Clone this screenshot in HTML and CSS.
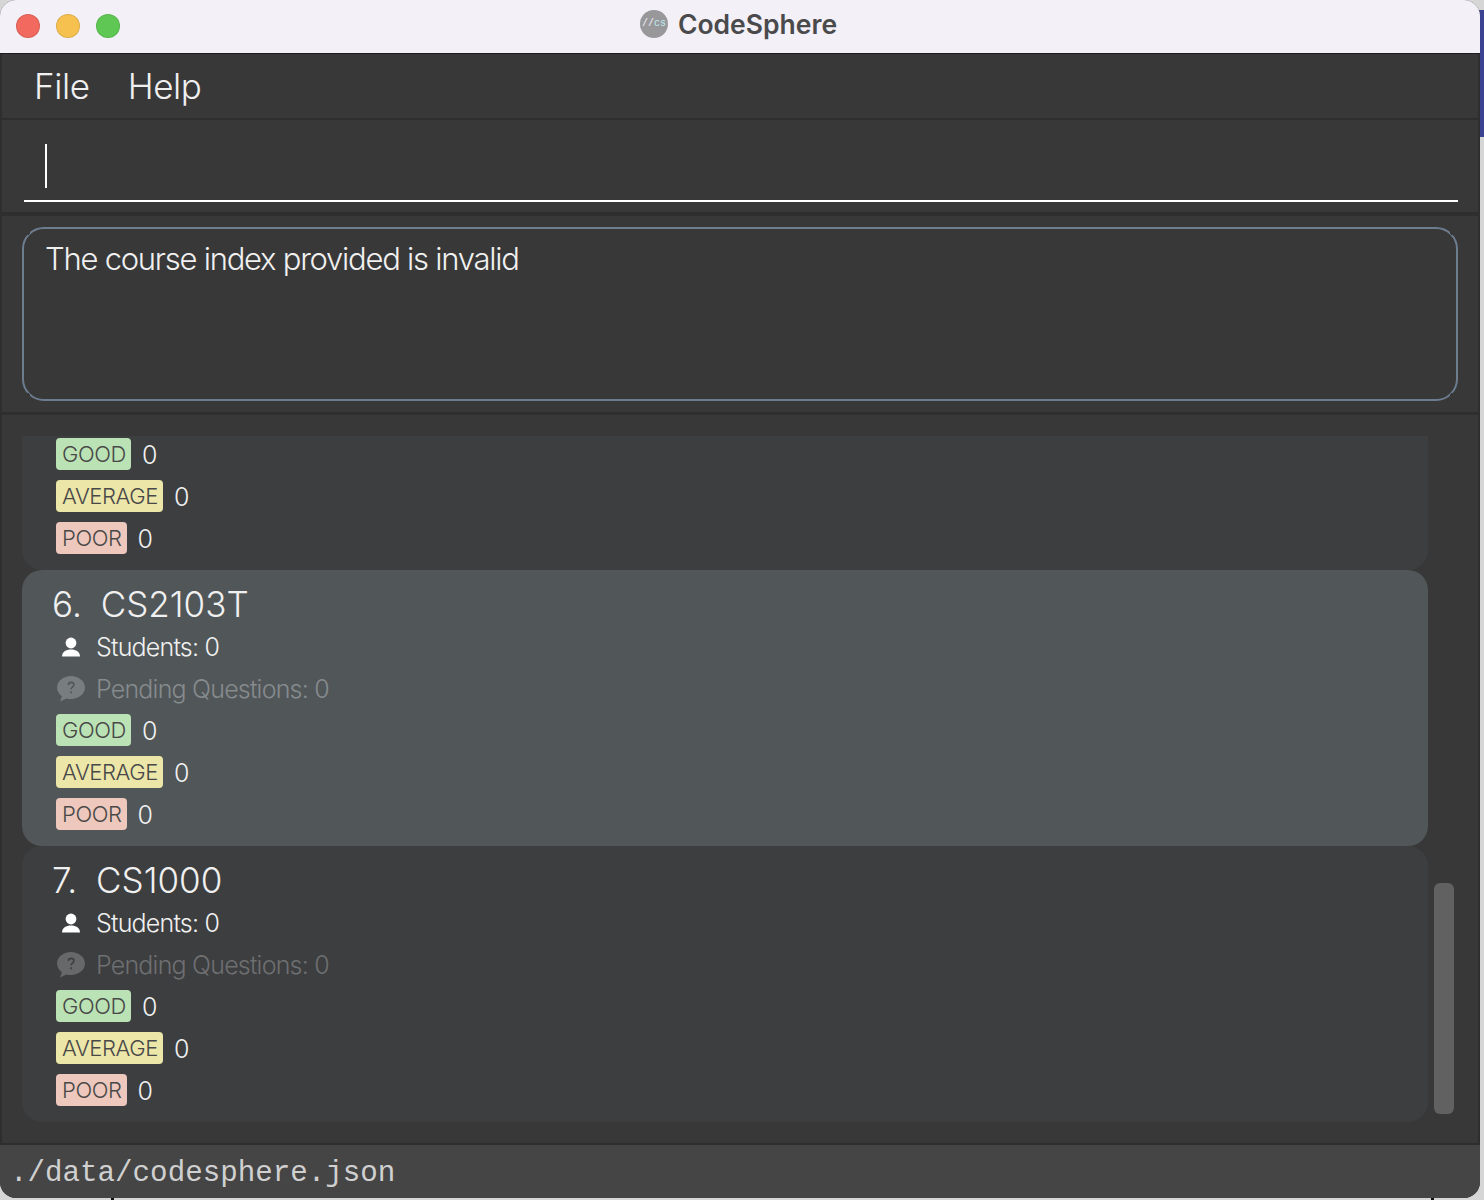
FILE: index.html
```html
<!DOCTYPE html>
<html lang="en">
<head>
    <meta charset="UTF-8">
    <meta name="viewport" content="width=device-width, initial-scale=1.0">
    <title>CodeSphere</title>
    <link rel="stylesheet" href="styles.css">
</head>
<body>
    <div class="desktop-strip"></div>
    <span class="desktop-tick tick-left"></span>
    <span class="desktop-tick tick-right"></span>
    <div class="window">
        <div class="titlebar">
            <div class="traffic">
                <span class="light red"></span>
                <span class="light yellow"></span>
                <span class="light green"></span>
            </div>
            <div class="title">
                <span class="logo">//<span class="logo-cs">cs</span></span>
                <span>CodeSphere</span>
            </div>
        </div>

        <div class="menubar">
            <span>File</span>
            <span>Help</span>
        </div>

        <div class="command-box">
            <div class="command-input"><span class="caret"></span></div>
        </div>

        <div class="result-pane">
            <div class="result-box">The course index provided is invalid</div>
        </div>

        <div class="course-list">
            <div class="card partial">
                <div class="row"><span class="tag good">GOOD</span><span class="count">0</span></div>
                <div class="row"><span class="tag average">AVERAGE</span><span class="count">0</span></div>
                <div class="row"><span class="tag poor">POOR</span><span class="count">0</span></div>
            </div>

            <div class="card selected">
                <div class="card-title"><span class="index">6.</span><span>CS2103T</span></div>
                <div class="row info">
                    <svg class="icon" viewBox="0 0 28 28"><circle cx="15" cy="10" r="5.400"/><path d="M6 23.500c0-4.600 4-7 9-7s9 2.400 9 7z"/></svg>
                    <span>Students: 0</span>
                </div>
                <div class="row info muted">
                    <svg class="icon" viewBox="-1 0 28 28"><path d="M14 1C6.300 1 0 6.200 0 12.500c0 3.500 1.900 6.600 4.900 8.700L3 26.500l6.300-3.100c1.500.4 3.100.6 4.700.6 7.700 0 14-5.200 14-11.500S21.700 1 14 1z"/><path class="qmark" d="M11.300 9.800c.2-1.500 1.300-2.400 2.800-2.400 1.600 0 2.800 1 2.800 2.400 0 2.300-2.800 2.300-2.800 4.500M14.100 16.300v1.900"/></svg>
                    <span>Pending Questions: 0</span>
                </div>
                <div class="row"><span class="tag good">GOOD</span><span class="count">0</span></div>
                <div class="row"><span class="tag average">AVERAGE</span><span class="count">0</span></div>
                <div class="row"><span class="tag poor">POOR</span><span class="count">0</span></div>
            </div>

            <div class="card">
                <div class="card-title"><span class="index">7.</span><span>CS1000</span></div>
                <div class="row info">
                    <svg class="icon" viewBox="0 0 28 28"><circle cx="15" cy="10" r="5.400"/><path d="M6 23.500c0-4.600 4-7 9-7s9 2.400 9 7z"/></svg>
                    <span>Students: 0</span>
                </div>
                <div class="row info muted">
                    <svg class="icon" viewBox="-1 0 28 28"><path d="M14 1C6.300 1 0 6.200 0 12.500c0 3.500 1.900 6.600 4.900 8.700L3 26.500l6.300-3.100c1.500.4 3.100.6 4.700.6 7.700 0 14-5.200 14-11.500S21.700 1 14 1z"/><path class="qmark" d="M11.300 9.800c.2-1.500 1.300-2.400 2.800-2.400 1.600 0 2.800 1 2.800 2.400 0 2.300-2.800 2.300-2.800 4.500M14.100 16.300v1.900"/></svg>
                    <span>Pending Questions: 0</span>
                </div>
                <div class="row"><span class="tag good">GOOD</span><span class="count">0</span></div>
                <div class="row"><span class="tag average">AVERAGE</span><span class="count">0</span></div>
                <div class="row"><span class="tag poor">POOR</span><span class="count">0</span></div>
            </div>

            <div class="scroll-thumb"></div>
        </div>

        <div class="statusbar">./data/codesphere.json</div>
    </div>
</body>
</html>
```

FILE: styles.css
```css
body {
    margin: 0;
    width: 1484px;
    height: 1200px;
    overflow: hidden;
    position: relative;
    background: #d6d6d6;
    font-family: Inter, "Noto Sans", sans-serif;
    color: #f0f0f0;
}

/* bit of another window peeking out on the right */
.desktop-strip {
    position: absolute;
    left: 1470px;
    top: 10px;
    width: 14px;
    height: 127px;
    background: #3a4291;
}
.desktop-tick {
    position: absolute;
    top: 1197px;
    width: 3px;
    height: 3px;
    background: #111;
}
.tick-left { left: 111px; }
.tick-right { left: 1431px; }

.window {
    position: relative;
    width: 1480px;
    height: 1198px;
    display: flex;
    flex-direction: column;
    border-radius: 16px;
    overflow: hidden;
    background: #383838;
}

.titlebar {
    height: 53px;
    flex: none;
    display: flex;
    align-items: center;
    justify-content: center;
    position: relative;
    background: #f3f1f7;
    border-bottom: 1px solid #1c1c1c;
}
.traffic {
    position: absolute;
    left: 16px;
    top: 14px;
    display: flex;
    gap: 16px;
}
.light {
    width: 22px;
    height: 22px;
    border: 1px solid rgba(0, 0, 0, 0.1);
    border-radius: 50%;
}
.red { background: #f1695f; }
.yellow { background: #f7c14f; }
.green { background: #5fc854; }

.title {
    display: flex;
    align-items: center;
    gap: 10px;
    margin: -5px 0 0 -3px;
    font-size: 26.5px;
    font-weight: 600;
    color: #4a4a4c;
}
.logo {
    width: 28px;
    height: 28px;
    border-radius: 50%;
    background: #98979a;
    color: #f3f1f7;
    font-family: "Liberation Mono", monospace;
    font-size: 10px;
    font-weight: 400;
    line-height: 28px;
    text-align: center;
}
.logo-cs { color: #bfeef2; }

.menubar {
    height: 64px;
    flex: none;
    display: flex;
    align-items: center;
    gap: 38px;
    padding-left: 32px;
    font-size: 35px;
    font-weight: 300;
    letter-spacing: -0.4px;
    background: #383838;
    border-left: 2px solid #2e2e2e;
    border-right: 2px solid #2e2e2e;
}

.command-box {
    height: 94px;
    flex: none;
    box-sizing: border-box;
    padding: 24px 20px 10px 22px;
    border-top: 2px solid #2e2e2e;
    border-left: 2px solid #2e2e2e;
    border-right: 2px solid #2e2e2e;
}
.command-input {
    height: 58px;
    box-sizing: border-box;
    border-bottom: 2px solid #fff;
    padding-left: 21px;
}
.caret {
    display: block;
    width: 2px;
    height: 44px;
    background: #fff;
}

.result-pane {
    height: 203px;
    flex: none;
    box-sizing: border-box;
    padding: 11px 20px 11px 20px;
    border-top: 4px solid #2e2e2e;
    border-left: 2px solid #2e2e2e;
    border-right: 2px solid #2e2e2e;
    border-bottom: 3px solid #2e2e2e;
}
.result-box {
    position: relative;
    height: 174px;
    box-sizing: border-box;
    padding: 11px 21px;
    border: 2px solid #6d7d90;
    border-radius: 22px;
    font-size: 31px;
    font-weight: 300;
    line-height: 38px;
    letter-spacing: -1.250px;
}
/* the border breaks off at each corner */
.result-box::before {
    content: "";
    position: absolute;
    inset: -2px;
    background:
        radial-gradient(circle 3px at 5px 5px, #383838 98%, transparent) top left / 10px 10px no-repeat,
        radial-gradient(circle 3px at 5px 5px, #383838 98%, transparent) top right / 10px 10px no-repeat,
        radial-gradient(circle 3px at 5px 5px, #383838 98%, transparent) bottom left / 10px 10px no-repeat,
        radial-gradient(circle 3px at 5px 5px, #383838 98%, transparent) bottom right / 10px 10px no-repeat;
}

.course-list {
    flex: 1;
    position: relative;
    overflow: hidden;
    padding: 21px 0 0 20px;
    border-left: 2px solid #2e2e2e;
    border-right: 2px solid #2e2e2e;
}
.card {
    width: 1406px;
    height: 276px;
    box-sizing: border-box;
    padding: 0 0 10px 34px;
    border-radius: 20px;
    background: #3d3e40;
}
.card.partial {
    height: 134px;
    display: flex;
    flex-direction: column;
    justify-content: flex-end;
    border-radius: 0 0 20px 20px;
}
.card.selected {
    background: #515658;
}
.card-title {
    height: 56px;
    box-sizing: border-box;
    padding-top: 11px;
    display: flex;
    align-items: center;
    gap: 19px;
    margin-left: -4px;
    font-size: 35px;
    font-weight: 300;
}
.row {
    height: 42px;
    flex: none;
    display: flex;
    align-items: center;
    gap: 11px;
    font-size: 25px;
    font-weight: 300;
}
.info {
    gap: 12px;
    letter-spacing: -0.8px;
}
.icon {
    width: 28px;
    height: 28px;
    overflow: visible;
    fill: #fff;
}
.muted {
    color: #868b8e;
}
.muted .icon {
    fill: #787d80;
}
.qmark {
    fill: none;
    stroke: #515658;
    stroke-width: 1.600;
}
.card:not(.selected) .muted {
    color: #6e6f71;
}
.card:not(.selected) .muted .icon {
    fill: #676869;
}
.card:not(.selected) .qmark {
    stroke: #3d3e40;
}

.tag {
    height: 32px;
    box-sizing: border-box;
    margin-top: -2px;
    padding: 0 5px 0 6px;
    border-radius: 4px;
    font-size: 22px;
    font-weight: 300;
    line-height: 32px;
    letter-spacing: -0.4px;
    color: #484848;
}
.good { background: #bbe2b4; }
.average { background: #ece6a8; }
.poor { background: #eec8bd; }

.scroll-thumb {
    position: absolute;
    left: 1432px;
    top: 468px;
    width: 20px;
    height: 231px;
    border-radius: 6px;
    background: #616161;
}

.statusbar {
    height: 55px;
    flex: none;
    box-sizing: border-box;
    padding: 11px 0 0 10px;
    border-top: 2px solid #2e2e2e;
    background: #454545;
    font-family: "Liberation Mono", monospace;
    font-size: 29.200px;
    line-height: 36px;
    color: #d0d0d0;
}
```
